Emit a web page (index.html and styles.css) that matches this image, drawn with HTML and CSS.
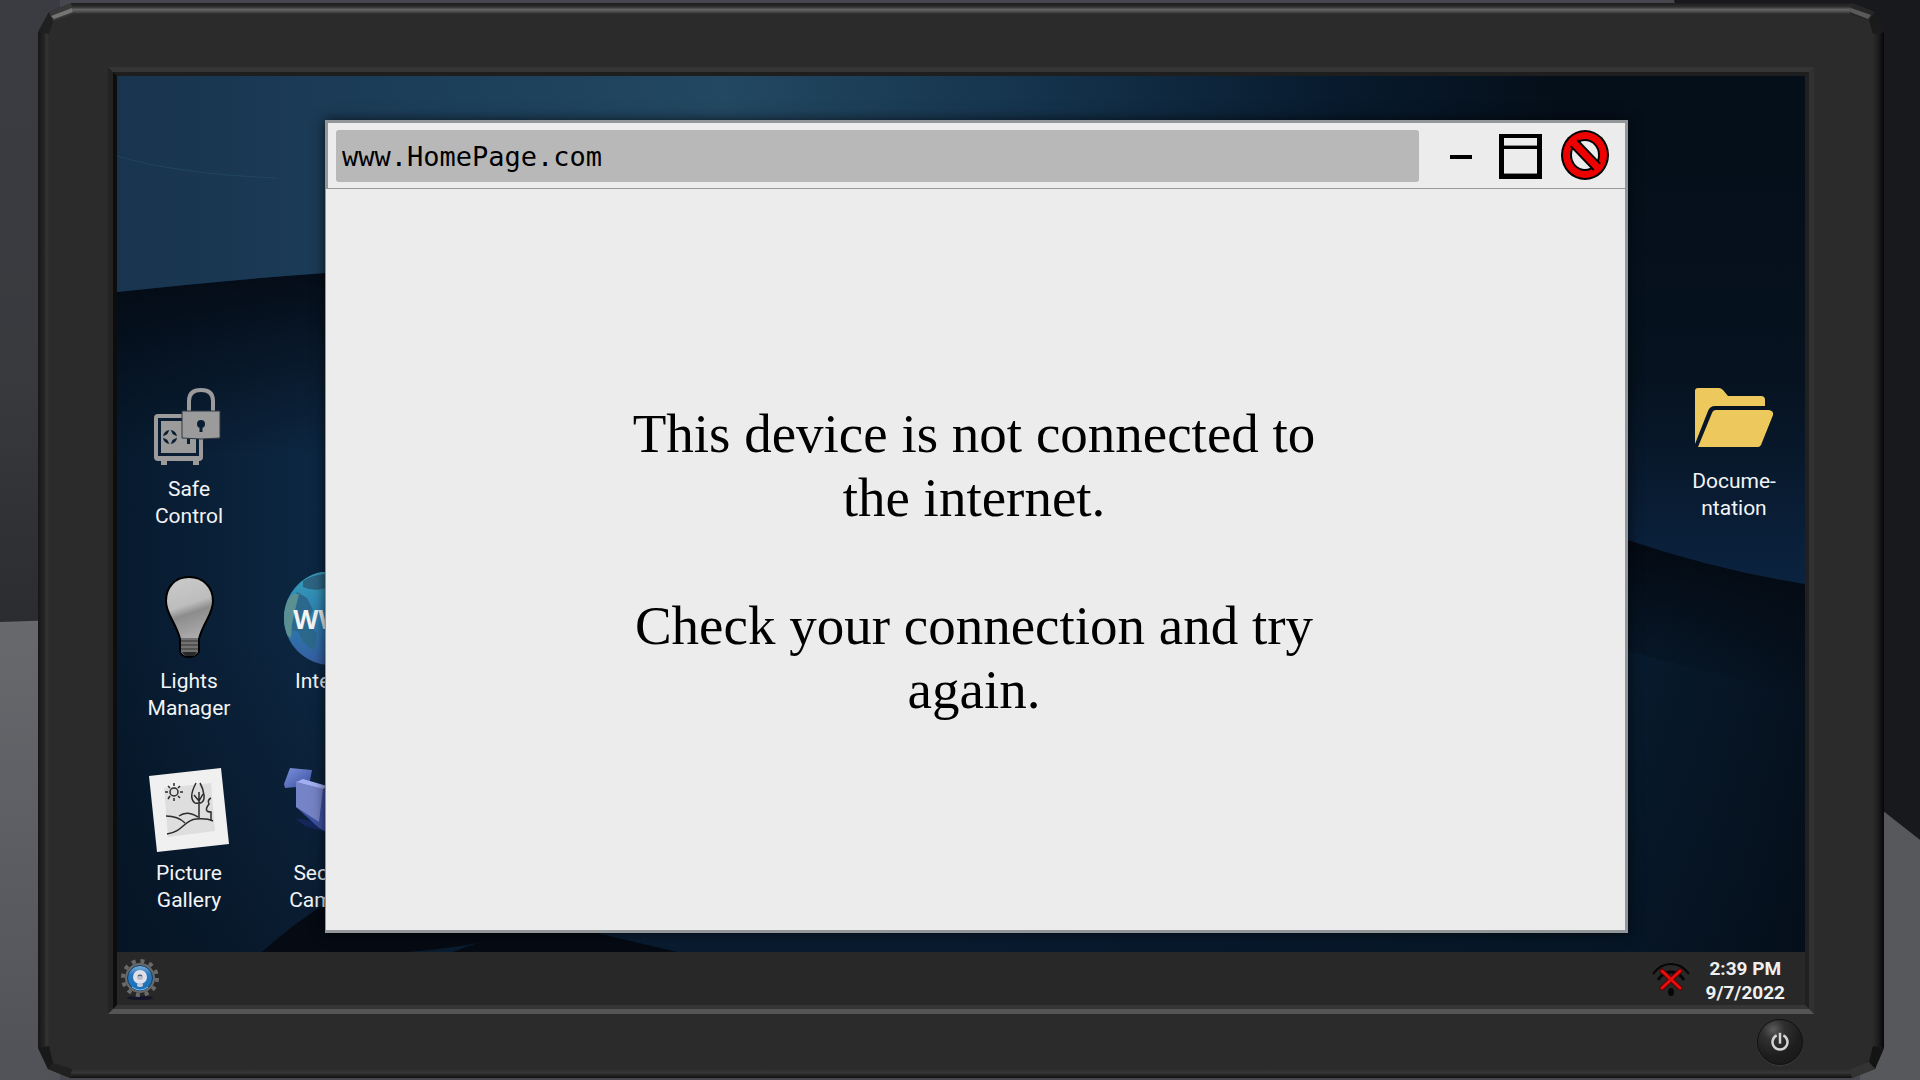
FILE: index.html
```html
<!DOCTYPE html>
<html lang="en">
<head>
    <meta charset="UTF-8">
    <meta name="viewport" content="width=device-width, initial-scale=1.0">
    <title>Desktop</title>
    <link rel="stylesheet" href="styles.css">
</head>
<body>
    <!-- room behind the monitor -->
    <svg class="room" viewBox="0 0 1920 1080" preserveAspectRatio="none" aria-hidden="true">
        <defs>
            <linearGradient id="wallLeft" x1="0" y1="0" x2="0" y2="1">
                <stop offset="0" stop-color="#3b3c41"/>
                <stop offset="0.6" stop-color="#393a3e"/>
                <stop offset="1" stop-color="#2b2c2f"/>
            </linearGradient>
            <linearGradient id="desk" x1="0" y1="0" x2="0" y2="1">
                <stop offset="0" stop-color="#68696d"/>
                <stop offset="1" stop-color="#515257"/>
            </linearGradient>
        </defs>
        <rect width="1920" height="1080" fill="#47484f"/>
        <rect width="60" height="622" fill="url(#wallLeft)"/>
        <path d="M0 622 L60 620 V1080 H0 Z" fill="url(#desk)"/>
        <path d="M1674 0 H1920 V840 L1860 793 Z" fill="#18191d"/>
        <path d="M1860 793 L1920 840 V1080 H1860 Z" fill="#57585c"/>
    </svg>

    <div class="monitor">
        <svg class="monitor-case" viewBox="0 0 1846 1075" preserveAspectRatio="none" aria-hidden="true">
            <defs>
                <linearGradient id="edgeTop" x1="0" y1="0" x2="0" y2="1">
                    <stop offset="0" stop-color="#1c1c1c"/>
                    <stop offset="0.35" stop-color="#2e2e2e"/>
                    <stop offset="0.6" stop-color="#656565"/>
                    <stop offset="0.8" stop-color="#4c4c4c"/>
                    <stop offset="1" stop-color="#2b2b2b"/>
                </linearGradient>
                <linearGradient id="edgeLeft">
                    <stop offset="0" stop-color="#161616"/>
                    <stop offset="0.5" stop-color="#222222"/>
                    <stop offset="0.8" stop-color="#343434"/>
                    <stop offset="1" stop-color="#2b2b2b"/>
                </linearGradient>
                <linearGradient id="edgeRight">
                    <stop offset="0" stop-color="#2b2b2b"/>
                    <stop offset="0.5" stop-color="#1c1c1c"/>
                    <stop offset="1" stop-color="#060606"/>
                </linearGradient>
                <linearGradient id="edgeBottom" x1="0" y1="0" x2="0" y2="1">
                    <stop offset="0" stop-color="#2b2b2b"/>
                    <stop offset="0.4" stop-color="#363636"/>
                    <stop offset="1" stop-color="#101010"/>
                </linearGradient>
            </defs>
            <path d="M0 29 L11 9 L33 0 H1814 L1837 9 L1846 29 V1045 L1837 1066 L1814 1075 H32 L10 1066 L0 1045 Z" fill="#2b2b2b"/>
            <path d="M0 29 L11 31 V1043 L0 1045 Z" fill="url(#edgeLeft)"/>
            <path d="M1846 29 L1835 31 V1043 L1846 1045 Z" fill="url(#edgeRight)"/>
            <path d="M33 0 H1814 L1812 11 H35 Z" fill="url(#edgeTop)"/>
            <path d="M32 1075 H1814 L1812 1066 H34 Z" fill="url(#edgeBottom)"/>
            <path d="M0 29 L11 9 L16 16 L11 31 Z" fill="#202020"/>
            <path d="M11 9 L33 0 L35 11 L15 18 Z" fill="#383838"/>
            <path d="M13 13 L34 5 L35 9 L16 16 Z" fill="#747474"/>
            <path d="M1814 0 L1837 9 L1831 17 L1812 11 Z" fill="#262626"/>
            <path d="M1813 5 L1833 12 L1830 16 L1812 9 Z" fill="#5a5a5a"/>
            <path d="M1837 9 L1846 29 L1835 31 L1831 17 Z" fill="#1a1a1a"/>
            <path d="M0 1045 L10 1066 L15 1060 L11 1043 Z" fill="#191919"/>
            <path d="M10 1066 L32 1075 L34 1066 L15 1060 Z" fill="#202020"/>
            <path d="M1846 1045 L1837 1066 L1831 1059 L1835 1043 Z" fill="#141414"/>
            <path d="M1837 1066 L1814 1075 L1812 1066 L1831 1059 Z" fill="#333333"/>
        </svg>

        <div class="bezel">
            <div class="screen">
                <main class="desktop">
                    <svg class="wallpaper" viewBox="0 0 1688 876" preserveAspectRatio="none" aria-hidden="true">
                        <defs>
                            <linearGradient id="wpBase">
                                <stop offset="0" stop-color="#071a2e"/>
                                <stop offset="0.12" stop-color="#0d2742"/>
                                <stop offset="0.5" stop-color="#0c2540"/>
                                <stop offset="0.88" stop-color="#081d31"/>
                                <stop offset="1" stop-color="#06121f"/>
                            </linearGradient>
                            <linearGradient id="wpTop">
                                <stop offset="0" stop-color="#19344f"/>
                                <stop offset="0.2" stop-color="#1c3f5a"/>
                                <stop offset="0.36" stop-color="#234862"/>
                                <stop offset="0.55" stop-color="#14324b"/>
                                <stop offset="0.72" stop-color="#081b2e"/>
                                <stop offset="0.85" stop-color="#050f1a"/>
                                <stop offset="1" stop-color="#050f1a"/>
                            </linearGradient>
                            <linearGradient id="wpShade" x1="0" y1="0" x2="0" y2="1">
                                <stop offset="0" stop-color="#03060d" stop-opacity="0.95"/>
                                <stop offset="1" stop-color="#03060d" stop-opacity="0"/>
                            </linearGradient>
                            <linearGradient id="wpRight" x1="0" y1="0" x2="0" y2="1">
                                <stop offset="0" stop-color="#050f1a"/>
                                <stop offset="0.55" stop-color="#06121f"/>
                                <stop offset="1" stop-color="#0b2340"/>
                            </linearGradient>
                            <linearGradient id="wpFade" x1="0" y1="0" x2="0" y2="1">
                                <stop offset="0" stop-color="#040b15" stop-opacity="0"/>
                                <stop offset="1" stop-color="#040b15" stop-opacity="0.4"/>
                            </linearGradient>
                        </defs>
                        <rect width="1688" height="876" fill="url(#wpBase)"/>
                        <path d="M0 216 Q110 204 208 197 L900 160 V380 H0 Z" fill="url(#wpShade)"/>
                        <path d="M0 0 H1688 V120 L900 160 L208 197 Q110 204 0 216 Z" fill="url(#wpTop)"/>
                        <path d="M0 80 Q60 98 160 102" fill="none" stroke="#2c5a70" stroke-opacity="0.4" stroke-width="1"/>
                        <path d="M1450 440 L1511 464 Q1600 494 1688 508 V620 L1450 560 Z" fill="url(#wpShade)"/>
                        <path d="M1450 50 H1688 V508 Q1600 494 1511 464 L1450 440 Z" fill="url(#wpRight)"/>
                        <rect y="560" width="1688" height="316" fill="url(#wpFade)"/>
                        <path d="M145 876 Q178 846 220 820 L420 850 Q370 870 290 876 Z" fill="#050a13"/>
                        <path d="M336 876 Q390 854 450 850 L560 876 Z" fill="#050a13"/>
                    </svg>

                    <div class="icon-grid">
                        <button class="icon safe" type="button">
                            <svg viewBox="0 0 96 96" aria-hidden="true">
                                <g fill="#9b9b9b">
                                    <path d="M17 34 H58 Q62 34 62 38 V77 Q62 81 58 81 V85 H52 V81 H26 V85 H20 V81 H17 Q13 81 13 77 V38 Q13 34 17 34 Z"/>
                                    <rect x="17" y="38" width="41" height="38" fill="#0a1e33"/>
                                    <rect x="20" y="41" width="35" height="32"/>
                                    <circle cx="29" cy="57" r="7" fill="#0a1e33"/>
                                    <path d="M29 51 L31 55 L35 57 L31 59 L29 63 L27 59 L23 57 L27 55 Z" stroke="#9b9b9b" stroke-width="2"/>
                                    <rect x="46" y="58" width="3" height="6" fill="#0a1e33"/>
                                </g>
                                <path d="M48 33 V21 Q48 10 60 10 Q72 10 72 21 V33" fill="none" stroke="#9b9b9b" stroke-width="4"/>
                                <path d="M41 31 H79 V58 Q60 60 41 58 Z" fill="#9b9b9b" stroke="#2d3741" stroke-width="1"/>
                                <circle cx="60" cy="44" r="4" fill="#0a1e33"/>
                                <path d="M60 44 V52" stroke="#0a1e33" stroke-width="3"/>
                            </svg>
                            <span>Safe<br>Control</span>
                        </button>
                        <div></div>
                        <button class="icon" type="button">
                            <svg viewBox="0 0 96 96" aria-hidden="true">
                                <defs>
                                    <linearGradient id="bulbGlass" x1="0.4" y1="0" x2="0.6" y2="1">
                                        <stop offset="0" stop-color="#c9c9c9"/>
                                        <stop offset="0.34" stop-color="#bdbdbd"/>
                                        <stop offset="0.46" stop-color="#8c8c8c"/>
                                        <stop offset="1" stop-color="#c4c4c4"/>
                                    </linearGradient>
                                </defs>
                                <path d="M48 5 C62 5 72 15 72 29 C72 43 62 50 58 67 V80 Q54 85 48 85 Q42 85 39 80 V67 C35 50 25 43 25 29 C25 15 34 5 48 5 Z" fill="url(#bulbGlass)" stroke="#000" stroke-width="2"/>
                                <path d="M40 66 H57 V80 L53 84 H44 L40 80 Z" fill="#727272"/>
                                <path d="M40 69 H57 M40 73 H57 M40 77 H57" stroke="#333" stroke-width="1"/>
                                <path d="M41 80 H56 L53 84 H44 Z" fill="#292929"/>
                            </svg>
                            <span>Lights<br>Manager</span>
                        </button>
                        <button class="icon" type="button">
                            <svg viewBox="0 0 96 96" aria-hidden="true">
                                <defs>
                                    <linearGradient id="globe" x1="0" y1="0" x2="0" y2="1">
                                        <stop offset="0" stop-color="#379dbb"/>
                                        <stop offset="0.55" stop-color="#2c7aae"/>
                                        <stop offset="1" stop-color="#37599f"/>
                                    </linearGradient>
                                    <clipPath id="globeClip"><circle cx="48" cy="46" r="47"/></clipPath>
                                </defs>
                                <g clip-path="url(#globeClip)">
                                    <rect width="96" height="96" fill="url(#globe)"/>
                                    <path d="M20 9 Q34 0 48 3 V14 Q32 21 20 15 Z" fill="#2d6482"/>
                                    <path d="M14 20 L24 26 L30 38 L25 50 L34 62 L31 79 L20 70 L15 60 L8 58 L10 32 Z" fill="#2c688c"/>
                                    <path d="M10 22 L16 22 L12 38 L9 52 L8 66 L0 60 V32 Z" fill="#5b9092"/>
                                </g>
                                <text class="globe-text" x="48" y="57" text-anchor="middle">WWW</text>
                            </svg>
                            <span>Internet</span>
                        </button>
                        <button class="icon" type="button">
                            <svg viewBox="0 0 96 96" aria-hidden="true">
                                <path d="M8 12 L80 4 L88 80 L16 88 Z" fill="#f0f0f0"/>
                                <path d="M23 24 L70 19 L74 67 L27 73 Z" fill="#dedede"/>
                                <g fill="none" stroke="#2b2b2b" stroke-width="1.5">
                                    <circle cx="33" cy="28" r="4"/>
                                    <path d="M33 22 V19 M33 34 V37 M39 28 H42 M27 28 H24 M37 24 L39 22 M29 24 L27 22 M37 32 L39 34 M29 32 L27 35"/>
                                    <path d="M55 19 Q47 34 54 39 Q64 41 63 31 Q62 24 59 19 M58 28 V54 M53 31 L58 37 L62 30"/>
                                    <path d="M70 34 Q66 36 68 40 Q62 48 70 48 V57"/>
                                    <path d="M25 52 Q37 52 44 59 M38 52 Q46 46 57 53 M26 70 C42 68 43 56 55 55 Q66 54 72 57"/>
                                </g>
                            </svg>
                            <span>Picture<br>Gallery</span>
                        </button>
                        <button class="icon" type="button">
                            <svg viewBox="0 0 96 96" aria-hidden="true">
                                <defs>
                                    <linearGradient id="cam" x1="0" y1="0" x2="1" y2="1">
                                        <stop offset="0" stop-color="#7b92dc"/>
                                        <stop offset="1" stop-color="#3a4ea0"/>
                                    </linearGradient>
                                </defs>
                                <path d="M12 54 L30 57 L48 68 V70 L22 62 Z" fill="#14265a"/>
                                <path d="M7 4 L29 6 L26 22 L2 24 L1 20 Z" fill="url(#cam)"/>
                                <path d="M15 16 L40 21 L60 36 L56 74 L36 64 L13 43 Z" fill="#3d51a2"/>
                                <path d="M13 18 L40 25 L36 58 L13 43 Z" fill="#7584c6"/>
                                <path d="M13 18 L40 25 L44 22 L20 15 Z" fill="#a3aff0"/>
                            </svg>
                            <span>Security<br>Cameras</span>
                        </button>
                    </div>

                    <div class="icon-column">
                        <button class="icon" type="button">
                            <svg viewBox="0 0 96 96" aria-hidden="true">
                                <path d="M9 71 V19 Q9 16 12 16 H33 Q35 16 37 18 L42 24 H75 Q79 24 79 28 V34 H29 Q24 34 22 39 L9 72 Z" fill="#ecc85d"/>
                                <path d="M12 75 L26 41 Q27 38 30 38 H83 Q88 39 87 43 L75 73 Q74 75 72 75 Z" fill="#ecc85d"/>
                            </svg>
                            <span>Docume-<br>ntation</span>
                        </button>
                    </div>

                    <section class="window">
                        <header class="titlebar">
                            <input class="address" type="text" value="www.HomePage.com" aria-label="Address">
                            <button class="minimize" type="button" aria-label="Minimize">
                                <svg viewBox="0 0 40 52"><rect x="9" y="25" width="22" height="4"/></svg>
                            </button>
                            <button class="maximize" type="button" aria-label="Maximize">
                                <svg viewBox="0 0 44 52">
                                    <path d="M0 4 H43 V49 H0 Z M5 8 V44 H38 V8 Z" fill-rule="evenodd"/>
                                    <rect x="5" y="16" width="33" height="3"/>
                                    <rect x="5" y="15" width="33" height="1" fill="#888"/>
                                    <rect x="5" y="43" width="33" height="1" fill="#888"/>
                                </svg>
                            </button>
                            <button class="close" type="button" aria-label="Close">
                                <svg viewBox="0 0 48 52">
                                    <ellipse cx="24" cy="25" rx="24" ry="25"/>
                                    <ellipse cx="24" cy="25" rx="22" ry="23" fill="#ee0000"/>
                                    <ellipse cx="24" cy="25" rx="15" ry="16"/>
                                    <ellipse cx="24" cy="25" rx="13" ry="14" fill="#ececec"/>
                                    <path d="M13 13 L36 37" stroke="#000" stroke-width="11"/>
                                    <path d="M10 10 L38 39" stroke="#ee0000" stroke-width="7"/>
                                </svg>
                            </button>
                        </header>
                        <div class="page">
                            <div class="message">
                                <p>This device is not connected to the internet.</p>
                                <p>Check your connection and try again.</p>
                            </div>
                        </div>
                    </section>
                </main>

                <footer class="taskbar">
                    <button class="start" type="button" aria-label="Start">
                        <svg viewBox="0 0 40 44" aria-hidden="true">
                            <defs>
                                <linearGradient id="startBlue" x1="0" y1="0" x2="0" y2="1">
                                    <stop offset="0" stop-color="#7fb2dc"/>
                                    <stop offset="0.35" stop-color="#2a78bd"/>
                                    <stop offset="1" stop-color="#1670b8"/>
                                </linearGradient>
                            </defs>
                            <ellipse cx="19" cy="41" rx="13" ry="2" fill="#15152a"/>
                            <circle cx="19" cy="21" r="17" fill="none" stroke="#6a6a6a" stroke-width="4" stroke-dasharray="4 4.9"/>
                            <circle cx="19" cy="21" r="15" fill="#6a6a6a"/>
                            <circle cx="19" cy="21" r="12.5" fill="url(#startBlue)" stroke="#123c63" stroke-width="1"/>
                            <path d="M11 30 Q19 36 27 30" fill="none" stroke="#7cc4f0" stroke-width="1"/>
                            <circle cx="19" cy="20" r="7" fill="#dfe1ea"/>
                            <rect x="16" y="26" width="6" height="4" rx="2" fill="#c4c9d6"/>
                            <circle cx="19" cy="20" r="3" fill="#b9bcc8"/>
                            <path d="M17 19 Q19 17 21 19" fill="none" stroke="#444" stroke-width="1"/>
                        </svg>
                    </button>
                    <div class="tray">
                        <svg class="wifi" viewBox="0 0 38 36" role="img" aria-label="No connection">
                            <g fill="none" stroke="#060606" stroke-width="2">
                                <path d="M1 13 Q8 3 19 3 Q30 3 37 13"/>
                                <path d="M6 19 Q11 11 19 11 Q27 11 32 19" stroke-width="3"/>
                            </g>
                            <ellipse cx="19" cy="31" rx="3" ry="4" fill="#060606"/>
                            <path d="M10 10 L28 27 M28 10 L10 27" stroke="#5a0000" stroke-width="5" stroke-linecap="round"/>
                            <path d="M10 10 L28 27 M28 10 L10 27" stroke="#e80c0c" stroke-width="3" stroke-linecap="round"/>
                        </svg>
                        <div class="clock">2:39 PM<br>9/7/2022</div>
                    </div>
                </footer>
            </div>
        </div>

        <div class="controls">
            <button class="power" type="button" aria-label="Power">
                <svg viewBox="0 0 24 24" fill="none" stroke="#d4d4d4" stroke-width="3">
                    <path d="M8 4 A9 9 0 1 0 16 4"/>
                    <path d="M12 1 V14"/>
                </svg>
            </button>
        </div>
    </div>
</body>
</html>
```

FILE: styles.css
```css
* { box-sizing: border-box; }
body { margin: 0; padding: 3px 36px 2px 38px; height: 100vh; overflow: hidden; position: relative; background: #47484f; font-family: Roboto, "Liberation Sans", sans-serif; }
button { padding: 0; border: none; background: none; color: inherit; font: inherit; cursor: pointer; }
svg { display: block; }
p { margin: 0; }

.room, .monitor-case, .wallpaper { position: absolute; top: 0; left: 0; width: 100%; height: 100%; }

/* monitor */
.monitor { position: relative; height: 100%; display: flex; flex-direction: column; padding: 64px 70px 0; }
.bezel { position: relative; flex: 1; min-height: 0; display: flex; border: 5px solid; border-color: #353535 #313131 #555555 #232323; }
.screen { flex: 1; min-width: 0; display: flex; flex-direction: column; border: 4px solid; border-color: #1e1e1e #202020 #363636 #0d0d0d; }
.controls { position: relative; height: 64px; display: flex; justify-content: flex-end; align-items: flex-start; padding: 5px 11px 0; }
.power { width: 46px; height: 46px; display: flex; justify-content: center; align-items: center; border: 1px solid #111; border-radius: 50%; background: radial-gradient(circle at 35% 22%, #5c5c5c 0, #303030 25%, #1d1d1d 60%, #161616 100%); box-shadow: 0 1px 1px #3c3c3c; }
.power svg { width: 20px; height: 22px; }

/* desktop */
.desktop { position: relative; flex: 1; min-height: 0; overflow: hidden; display: flex; justify-content: space-between; padding: 296px 0 0; }
.icon-grid { position: relative; display: grid; grid-template-columns: 142px 142px; grid-auto-rows: 192px; padding: 8px 0 0 1px; }
.icon-column { position: relative; width: 142px; }
.icon { width: 100%; display: flex; flex-direction: column; align-items: center; align-self: start; color: #f2f4f6; font-size: 21px; line-height: 27px; }
.icon svg { width: 96px; height: 96px; }
.globe-text { font: bold 26px "Open Sans", sans-serif; fill: #f4f4f4; }

/* browser window */
.window { position: absolute; top: 44px; right: 177px; bottom: 19px; left: 208px; display: flex; flex-direction: column; background: #ececec; border: 3px solid #94979a; border-left-width: 1px; box-shadow: 0 0 12px rgba(0, 0, 0, 0.7); }
.titlebar { display: flex; align-items: center; gap: 18px; padding: 7px 16px 6px 8px; border-left: 2px solid #94979a; border-bottom: 1px solid #999; }
.address { flex: 1; min-width: 0; height: 52px; margin-right: 4px; padding: 0 6px; border: none; border-radius: 3px; background: #b8b8b8; color: #000; font: 27px "DejaVu Sans Mono", monospace; }
.titlebar svg { width: 100%; height: 52px; }
.minimize { width: 40px; }
.maximize { width: 44px; }
.close { width: 48px; }
.page { flex: 1; display: flex; justify-content: center; align-items: center; padding: 4px 3px 0 0; }
.message { max-width: 704px; display: flex; flex-direction: column; gap: 64px; color: #000; font: 55px/64px "Liberation Serif", serif; text-align: center; }

/* taskbar */
.taskbar { height: 53px; display: flex; justify-content: space-between; align-items: center; padding: 0 20px 0 4px; background: #282828; color: #f0f0f0; }
.start { width: 40px; }
.start svg { width: 40px; height: 44px; }
.tray { display: flex; align-items: center; gap: 15px; padding-top: 4px; }
.wifi { width: 38px; height: 36px; margin-bottom: 4px; }
.clock { font-size: 19px; font-weight: 700; line-height: 24px; text-align: center; }
```
